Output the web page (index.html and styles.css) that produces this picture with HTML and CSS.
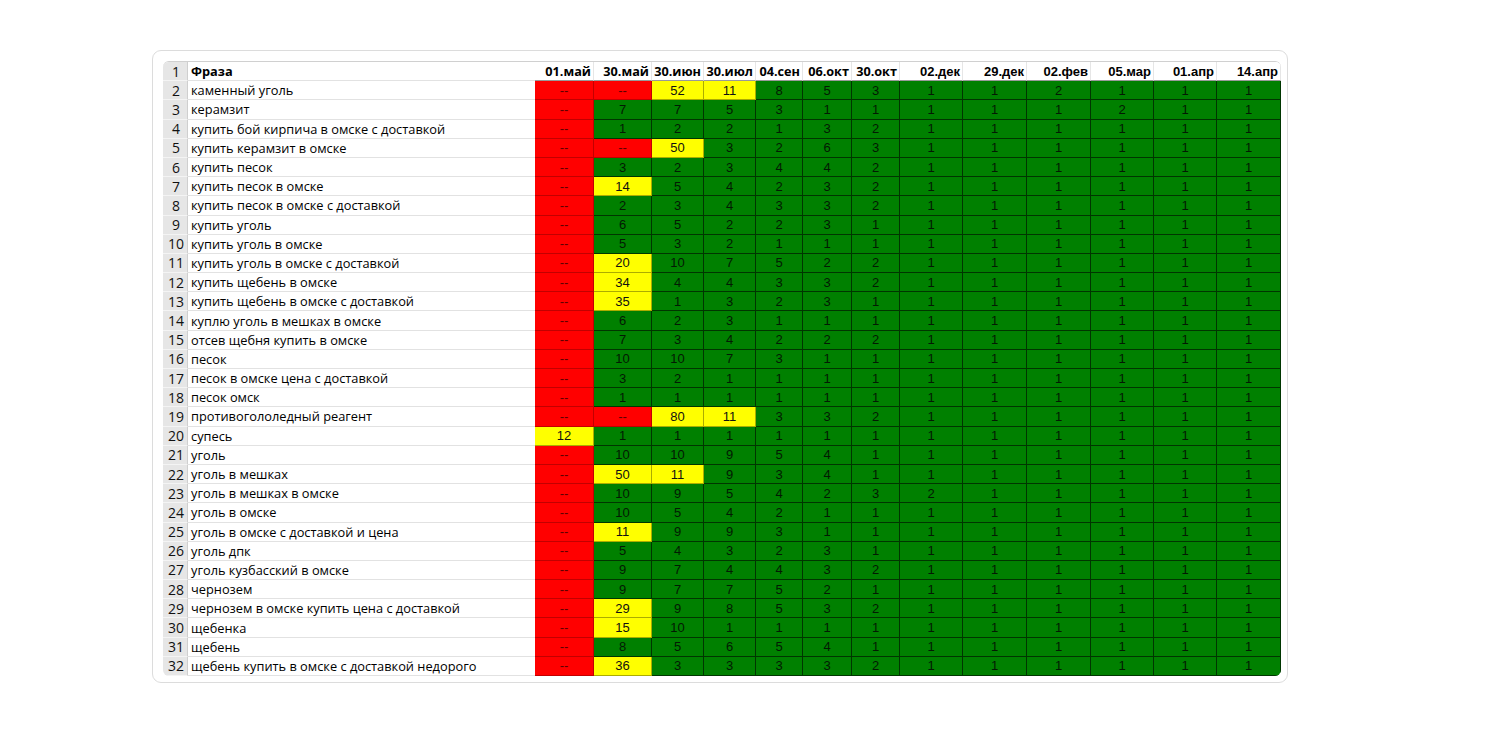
FILE: index.html
```html
<!DOCTYPE html>
<html lang="ru">
<head>
<meta charset="utf-8">
<title>Позиции</title>
<link rel="stylesheet" href="styles.css">
</head>
<body>
<div class="card">
<div class="sheet">
<div class="n">1</div><div class="p h">Фраза</div>
<div class="hd hc">01.май</div><div class="hd hc">30.май</div><div class="hd hc">30.июн</div><div class="hd hc">30.июл</div><div class="hd hc">04.сен</div><div class="hd hc">06.окт</div><div class="hd hc">30.окт</div>
<div class="hd ha">02.дек</div><div class="hd ha">29.дек</div><div class="hd ha">02.фев</div><div class="hd ha">05.мар</div><div class="hd ha">01.апр</div><div class="hd ha">14.апр</div>

<div class="n">2</div><div class="p">каменный уголь</div><div class="r">--</div><div class="r">--</div><div class="y">52</div><div class="y">11</div><div class="g">8</div><div class="g">5</div><div class="g">3</div><div class="g">1</div><div class="g">1</div><div class="g">2</div><div class="g">1</div><div class="g">1</div><div class="g">1</div>
<div class="n">3</div><div class="p">керамзит</div><div class="r">--</div><div class="g">7</div><div class="g">7</div><div class="g">5</div><div class="g">3</div><div class="g">1</div><div class="g">1</div><div class="g">1</div><div class="g">1</div><div class="g">1</div><div class="g">2</div><div class="g">1</div><div class="g">1</div>
<div class="n">4</div><div class="p">купить бой кирпича в омске с доставкой</div><div class="r">--</div><div class="g">1</div><div class="g">2</div><div class="g">2</div><div class="g">1</div><div class="g">3</div><div class="g">2</div><div class="g">1</div><div class="g">1</div><div class="g">1</div><div class="g">1</div><div class="g">1</div><div class="g">1</div>
<div class="n">5</div><div class="p">купить керамзит в омске</div><div class="r">--</div><div class="r">--</div><div class="y">50</div><div class="g">3</div><div class="g">2</div><div class="g">6</div><div class="g">3</div><div class="g">1</div><div class="g">1</div><div class="g">1</div><div class="g">1</div><div class="g">1</div><div class="g">1</div>
<div class="n">6</div><div class="p">купить песок</div><div class="r">--</div><div class="g">3</div><div class="g">2</div><div class="g">3</div><div class="g">4</div><div class="g">4</div><div class="g">2</div><div class="g">1</div><div class="g">1</div><div class="g">1</div><div class="g">1</div><div class="g">1</div><div class="g">1</div>
<div class="n">7</div><div class="p">купить песок в омске</div><div class="r">--</div><div class="y">14</div><div class="g">5</div><div class="g">4</div><div class="g">2</div><div class="g">3</div><div class="g">2</div><div class="g">1</div><div class="g">1</div><div class="g">1</div><div class="g">1</div><div class="g">1</div><div class="g">1</div>
<div class="n">8</div><div class="p">купить песок в омске с доставкой</div><div class="r">--</div><div class="g">2</div><div class="g">3</div><div class="g">4</div><div class="g">3</div><div class="g">3</div><div class="g">2</div><div class="g">1</div><div class="g">1</div><div class="g">1</div><div class="g">1</div><div class="g">1</div><div class="g">1</div>
<div class="n">9</div><div class="p">купить уголь</div><div class="r">--</div><div class="g">6</div><div class="g">5</div><div class="g">2</div><div class="g">2</div><div class="g">3</div><div class="g">1</div><div class="g">1</div><div class="g">1</div><div class="g">1</div><div class="g">1</div><div class="g">1</div><div class="g">1</div>
<div class="n">10</div><div class="p">купить уголь в омске</div><div class="r">--</div><div class="g">5</div><div class="g">3</div><div class="g">2</div><div class="g">1</div><div class="g">1</div><div class="g">1</div><div class="g">1</div><div class="g">1</div><div class="g">1</div><div class="g">1</div><div class="g">1</div><div class="g">1</div>
<div class="n">11</div><div class="p">купить уголь в омске с доставкой</div><div class="r">--</div><div class="y">20</div><div class="g">10</div><div class="g">7</div><div class="g">5</div><div class="g">2</div><div class="g">2</div><div class="g">1</div><div class="g">1</div><div class="g">1</div><div class="g">1</div><div class="g">1</div><div class="g">1</div>
<div class="n">12</div><div class="p">купить щебень в омске</div><div class="r">--</div><div class="y">34</div><div class="g">4</div><div class="g">4</div><div class="g">3</div><div class="g">3</div><div class="g">2</div><div class="g">1</div><div class="g">1</div><div class="g">1</div><div class="g">1</div><div class="g">1</div><div class="g">1</div>
<div class="n">13</div><div class="p">купить щебень в омске с доставкой</div><div class="r">--</div><div class="y">35</div><div class="g">1</div><div class="g">3</div><div class="g">2</div><div class="g">3</div><div class="g">1</div><div class="g">1</div><div class="g">1</div><div class="g">1</div><div class="g">1</div><div class="g">1</div><div class="g">1</div>
<div class="n">14</div><div class="p">куплю уголь в мешках в омске</div><div class="r">--</div><div class="g">6</div><div class="g">2</div><div class="g">3</div><div class="g">1</div><div class="g">1</div><div class="g">1</div><div class="g">1</div><div class="g">1</div><div class="g">1</div><div class="g">1</div><div class="g">1</div><div class="g">1</div>
<div class="n">15</div><div class="p">отсев щебня купить в омске</div><div class="r">--</div><div class="g">7</div><div class="g">3</div><div class="g">4</div><div class="g">2</div><div class="g">2</div><div class="g">2</div><div class="g">1</div><div class="g">1</div><div class="g">1</div><div class="g">1</div><div class="g">1</div><div class="g">1</div>
<div class="n">16</div><div class="p">песок</div><div class="r">--</div><div class="g">10</div><div class="g">10</div><div class="g">7</div><div class="g">3</div><div class="g">1</div><div class="g">1</div><div class="g">1</div><div class="g">1</div><div class="g">1</div><div class="g">1</div><div class="g">1</div><div class="g">1</div>
<div class="n">17</div><div class="p">песок в омске цена с доставкой</div><div class="r">--</div><div class="g">3</div><div class="g">2</div><div class="g">1</div><div class="g">1</div><div class="g">1</div><div class="g">1</div><div class="g">1</div><div class="g">1</div><div class="g">1</div><div class="g">1</div><div class="g">1</div><div class="g">1</div>
<div class="n">18</div><div class="p">песок омск</div><div class="r">--</div><div class="g">1</div><div class="g">1</div><div class="g">1</div><div class="g">1</div><div class="g">1</div><div class="g">1</div><div class="g">1</div><div class="g">1</div><div class="g">1</div><div class="g">1</div><div class="g">1</div><div class="g">1</div>
<div class="n">19</div><div class="p">противогололедный реагент</div><div class="r">--</div><div class="r">--</div><div class="y">80</div><div class="y">11</div><div class="g">3</div><div class="g">3</div><div class="g">2</div><div class="g">1</div><div class="g">1</div><div class="g">1</div><div class="g">1</div><div class="g">1</div><div class="g">1</div>
<div class="n">20</div><div class="p">супесь</div><div class="y">12</div><div class="g">1</div><div class="g">1</div><div class="g">1</div><div class="g">1</div><div class="g">1</div><div class="g">1</div><div class="g">1</div><div class="g">1</div><div class="g">1</div><div class="g">1</div><div class="g">1</div><div class="g">1</div>
<div class="n">21</div><div class="p">уголь</div><div class="r">--</div><div class="g">10</div><div class="g">10</div><div class="g">9</div><div class="g">5</div><div class="g">4</div><div class="g">1</div><div class="g">1</div><div class="g">1</div><div class="g">1</div><div class="g">1</div><div class="g">1</div><div class="g">1</div>
<div class="n">22</div><div class="p">уголь в мешках</div><div class="r">--</div><div class="y">50</div><div class="y">11</div><div class="g">9</div><div class="g">3</div><div class="g">4</div><div class="g">1</div><div class="g">1</div><div class="g">1</div><div class="g">1</div><div class="g">1</div><div class="g">1</div><div class="g">1</div>
<div class="n">23</div><div class="p">уголь в мешках в омске</div><div class="r">--</div><div class="g">10</div><div class="g">9</div><div class="g">5</div><div class="g">4</div><div class="g">2</div><div class="g">3</div><div class="g">2</div><div class="g">1</div><div class="g">1</div><div class="g">1</div><div class="g">1</div><div class="g">1</div>
<div class="n">24</div><div class="p">уголь в омске</div><div class="r">--</div><div class="g">10</div><div class="g">5</div><div class="g">4</div><div class="g">2</div><div class="g">1</div><div class="g">1</div><div class="g">1</div><div class="g">1</div><div class="g">1</div><div class="g">1</div><div class="g">1</div><div class="g">1</div>
<div class="n">25</div><div class="p">уголь в омске с доставкой и цена</div><div class="r">--</div><div class="y">11</div><div class="g">9</div><div class="g">9</div><div class="g">3</div><div class="g">1</div><div class="g">1</div><div class="g">1</div><div class="g">1</div><div class="g">1</div><div class="g">1</div><div class="g">1</div><div class="g">1</div>
<div class="n">26</div><div class="p">уголь дпк</div><div class="r">--</div><div class="g">5</div><div class="g">4</div><div class="g">3</div><div class="g">2</div><div class="g">3</div><div class="g">1</div><div class="g">1</div><div class="g">1</div><div class="g">1</div><div class="g">1</div><div class="g">1</div><div class="g">1</div>
<div class="n">27</div><div class="p">уголь кузбасский в омске</div><div class="r">--</div><div class="g">9</div><div class="g">7</div><div class="g">4</div><div class="g">4</div><div class="g">3</div><div class="g">2</div><div class="g">1</div><div class="g">1</div><div class="g">1</div><div class="g">1</div><div class="g">1</div><div class="g">1</div>
<div class="n">28</div><div class="p">чернозем</div><div class="r">--</div><div class="g">9</div><div class="g">7</div><div class="g">7</div><div class="g">5</div><div class="g">2</div><div class="g">1</div><div class="g">1</div><div class="g">1</div><div class="g">1</div><div class="g">1</div><div class="g">1</div><div class="g">1</div>
<div class="n">29</div><div class="p">чернозем в омске купить цена с доставкой</div><div class="r">--</div><div class="y">29</div><div class="g">9</div><div class="g">8</div><div class="g">5</div><div class="g">3</div><div class="g">2</div><div class="g">1</div><div class="g">1</div><div class="g">1</div><div class="g">1</div><div class="g">1</div><div class="g">1</div>
<div class="n">30</div><div class="p">щебенка</div><div class="r">--</div><div class="y">15</div><div class="g">10</div><div class="g">1</div><div class="g">1</div><div class="g">1</div><div class="g">1</div><div class="g">1</div><div class="g">1</div><div class="g">1</div><div class="g">1</div><div class="g">1</div><div class="g">1</div>
<div class="n">31</div><div class="p">щебень</div><div class="r">--</div><div class="g">8</div><div class="g">5</div><div class="g">6</div><div class="g">5</div><div class="g">4</div><div class="g">1</div><div class="g">1</div><div class="g">1</div><div class="g">1</div><div class="g">1</div><div class="g">1</div><div class="g">1</div>
<div class="n">32</div><div class="p">щебень купить в омске с доставкой недорого</div><div class="r">--</div><div class="y">36</div><div class="g">3</div><div class="g">3</div><div class="g">3</div><div class="g">3</div><div class="g">2</div><div class="g">1</div><div class="g">1</div><div class="g">1</div><div class="g">1</div><div class="g">1</div><div class="g">1</div>
</div>
</div>
</body>
</html>
```

FILE: styles.css
```css
html, body {
  margin: 0;
  padding: 0;
  background: #ffffff;
}

body {
  padding: 50px 0 0 152px;
}

.card {
  box-sizing: border-box;
  width: 1136px;
  height: 633px;
  border: 1px solid #dcdcdc;
  border-radius: 9px;
  padding: 10px 6px 7px 10px;
  background: #fff;
}

.sheet {
  display: grid;
  grid-template-columns: 25px 347px 59px 58px 52px 52px 47px 49px 48px 63px 64px 64px 63px 63px 64px;
  grid-auto-rows: 19.19px;
  border-radius: 6px;
  overflow: hidden;
  width: 1118px;
  border-top: 1px solid #d0d0d0;
  box-sizing: border-box;
}

.sheet > div {
  box-sizing: border-box;
  white-space: nowrap;
  overflow: hidden;
  display: flex;
  align-items: center;
}

.n {
  background: #e6e6e6;
  justify-content: center;
  font-family: "Open Sans", "Noto Sans", sans-serif;
  font-size: 14px;
  color: #111;
  border-bottom: 1px solid #f4f4f4;
  border-right: 1px solid #cfcfcf;
  padding-left: 2px;
}

.p {
  background: #fff;
  font-family: "Open Sans", "Noto Sans", sans-serif;
  font-size: 12.8px;
  color: #000;
  padding-left: 3px;
  border-bottom: 1px solid #e2e2e2;
}

.h {
  font-weight: 700;
  color: #000;
}

.hd {
  background: #fff;
  justify-content: flex-end;
  font-weight: 700;
  color: #000;
  padding-right: 2px;
  border-right: 1px solid #e6e6e6;
  border-bottom: 1px solid #9a9a9a;
}

.hc {
  font-family: "Open Sans", "Noto Sans", sans-serif;
  font-size: 12.7px;
}

.ha {
  font-family: "Liberation Sans", Arial, sans-serif;
  font-size: 13px;
}

.r, .y, .g {
  justify-content: center;
  font-family: "Liberation Sans", Arial, sans-serif;
  font-size: 13px;
  border-right: 1px solid rgba(0, 0, 0, 0.55);
  border-bottom: 1px solid rgba(0, 0, 0, 0.55);
}

.r {
  background: #ff0000;
  color: #5c0000;
  border-color: rgba(120, 0, 0, 0.45);
}

.y {
  background: #ffff00;
  color: #111;
  border-color: rgba(90, 90, 0, 0.5);
}

.g {
  background: #008000;
  color: #031a03;
  border-color: rgba(0, 30, 0, 0.75);
}
```
